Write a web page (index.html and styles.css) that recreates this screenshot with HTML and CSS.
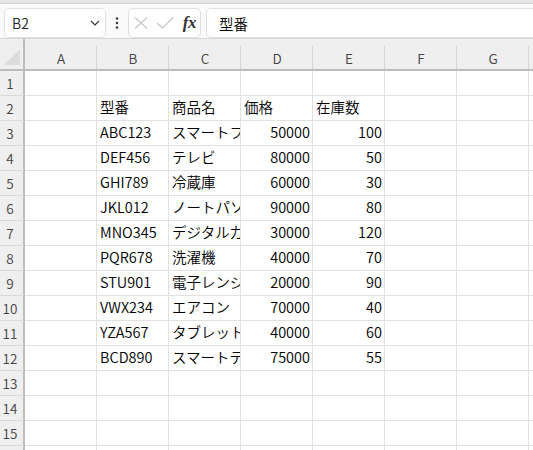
FILE: index.html
```html
<!DOCTYPE html>
<html lang="ja">
<head>
    <meta charset="UTF-8">
    <title>Sheet1</title>
    <link rel="stylesheet" href="styles.css">
</head>
<body>
    <div class="top-strip"></div>
    <div class="formula-bar">
        <div class="name-box">
            <span>B2</span>
            <svg class="chevron" width="10" height="6" viewBox="0 0 10 6"><path d="M1 1 L5 5 L9 1" fill="none" stroke="#333" stroke-width="1.1"/></svg>
        </div>
        <div class="more">
            <svg width="4" height="12" viewBox="0 0 4 12"><circle cx="2" cy="1.5" r="1.2" fill="#333"/><circle cx="2" cy="6" r="1.2" fill="#333"/><circle cx="2" cy="10.5" r="1.2" fill="#333"/></svg>
        </div>
        <div class="fx-box">
            <svg width="14" height="12" viewBox="0 0 14 12"><path d="M1 0.5 L13 11.5 M13 0.5 L1 11.5" stroke="#c6c6c6" stroke-width="1.1" fill="none"/></svg>
            <svg width="18" height="12" viewBox="0 0 18 12"><path d="M1 6 L6.5 11 L17 0.5" stroke="#c6c6c6" stroke-width="1.1" fill="none"/></svg>
            <span class="fx">fx</span>
        </div>
        <div class="formula-input">型番</div>
    </div>

    <div class="sheet">
        <div class="row head">
            <div class="corner"></div>
            <div class="ch">A</div><div class="ch">B</div><div class="ch">C</div><div class="ch">D</div>
            <div class="ch">E</div><div class="ch">F</div><div class="ch">G</div><div class="ch"></div>
        </div>
        <div class="row">
            <div class="rh">1</div><div></div><div></div><div></div><div></div><div></div><div></div><div></div><div></div>
        </div>
        <div class="row">
            <div class="rh">2</div><div></div><div>型番</div><div>商品名</div><div>価格</div><div>在庫数</div><div></div><div></div><div></div>
        </div>
        <div class="row">
            <div class="rh">3</div><div></div><div>ABC123</div><div class="clip">スマートフォン</div><div class="num">50000</div><div class="num">100</div><div></div><div></div><div></div>
        </div>
        <div class="row">
            <div class="rh">4</div><div></div><div>DEF456</div><div>テレビ</div><div class="num">80000</div><div class="num">50</div><div></div><div></div><div></div>
        </div>
        <div class="row">
            <div class="rh">5</div><div></div><div>GHI789</div><div>冷蔵庫</div><div class="num">60000</div><div class="num">30</div><div></div><div></div><div></div>
        </div>
        <div class="row">
            <div class="rh">6</div><div></div><div>JKL012</div><div class="clip">ノートパソコン</div><div class="num">90000</div><div class="num">80</div><div></div><div></div><div></div>
        </div>
        <div class="row">
            <div class="rh">7</div><div></div><div>MNO345</div><div class="clip">デジタルカメラ</div><div class="num">30000</div><div class="num">120</div><div></div><div></div><div></div>
        </div>
        <div class="row">
            <div class="rh">8</div><div></div><div>PQR678</div><div>洗濯機</div><div class="num">40000</div><div class="num">70</div><div></div><div></div><div></div>
        </div>
        <div class="row">
            <div class="rh">9</div><div></div><div>STU901</div><div class="clip">電子レンジ</div><div class="num">20000</div><div class="num">90</div><div></div><div></div><div></div>
        </div>
        <div class="row">
            <div class="rh">10</div><div></div><div>VWX234</div><div>エアコン</div><div class="num">70000</div><div class="num">40</div><div></div><div></div><div></div>
        </div>
        <div class="row">
            <div class="rh">11</div><div></div><div>YZA567</div><div class="clip">タブレット</div><div class="num">40000</div><div class="num">60</div><div></div><div></div><div></div>
        </div>
        <div class="row">
            <div class="rh">12</div><div></div><div>BCD890</div><div class="clip">スマートテレビ</div><div class="num">75000</div><div class="num">55</div><div></div><div></div><div></div>
        </div>
        <div class="row">
            <div class="rh">13</div><div></div><div></div><div></div><div></div><div></div><div></div><div></div><div></div>
        </div>
        <div class="row">
            <div class="rh">14</div><div></div><div></div><div></div><div></div><div></div><div></div><div></div><div></div>
        </div>
        <div class="row">
            <div class="rh">15</div><div></div><div></div><div></div><div></div><div></div><div></div><div></div><div></div>
        </div>
        <div class="row">
            <div class="rh">16</div><div></div><div></div><div></div><div></div><div></div><div></div><div></div><div></div>
        </div>
    </div>
</body>
</html>
```

FILE: styles.css
```css
body {
    margin: 0;
    background: #fff;
    font-family: "Noto Sans CJK JP", "Noto Sans", sans-serif;
    font-weight: 350;
    color: #000;
    overflow: hidden;
}
.top-strip {
    height: 3px;
    background: #e6e6e6;
    border-bottom: 1px solid #d2d2d2;
}
.formula-bar {
    display: flex;
    align-items: flex-start;
    height: 34px;
    padding: 4px 0 0 4px;
    box-sizing: border-box;
    background: #fafafa;
    overflow: hidden;
    white-space: nowrap;
}
.name-box,
.fx-box,
.formula-input {
    flex-shrink: 0;
    height: 30px;
    box-sizing: border-box;
    background: #fff;
    border: 1px solid #e0e0e0;
    border-radius: 5px;
    display: flex;
    align-items: center;
}
.name-box {
    width: 102px;
    padding: 0 5px 0 7px;
    justify-content: space-between;
    font-size: 14px;
    color: #222;
}
.more {
    flex-shrink: 0;
    width: 22px;
    height: 30px;
    display: flex;
    align-items: center;
    justify-content: center;
}
.fx-box {
    width: 73px;
    padding: 0 4px 0 5px;
    justify-content: space-between;
}
.fx {
    font-family: "Liberation Serif", serif;
    font-style: italic;
    font-weight: bold;
    font-size: 17px;
    color: #333;
    letter-spacing: -0.5px;
}
.formula-input {
    margin-left: 5px;
    width: 400px;
    padding-left: 12px;
    font-size: 14.5px;
}

.sheet {
    border-top: 1px solid #d6d6d6;
}
.row {
    display: grid;
    grid-template-columns: 25px repeat(7, 72px) 1fr;
    height: 25px;
}
.row > div {
    box-sizing: border-box;
    border-right: 1px solid #e1e1e1;
    border-bottom: 1px solid #e1e1e1;
    font-size: 14.5px;
    line-height: 22px;
    padding: 0 3px;
    white-space: nowrap;
    overflow: hidden;
}
.row > .num {
    text-align: right;
    padding-right: 2px;
}
.row > .clip {
    text-overflow: clip;
}
.row > .rh {
    background: #efefef;
    border-right: 2px solid #bdbdbd;
    border-bottom-color: #d8d8d8;
    color: #444;
    font-size: 13.5px;
    line-height: 24px;
    padding: 0 3px 0 0;
    text-align: center;
}
.row.head {
    height: 32px;
}
.row.head > div {
    background: #efefef linear-gradient(#d8d8d8, #d8d8d8) right bottom / 1px 23px no-repeat;
    border-right: 0;
    border-bottom: 2px solid #bdbdbd;
    color: #444;
    font-size: 13.5px;
    line-height: 20px;
    padding-top: 9px;
    text-align: center;
}
.row.head > .corner {
    background: #efefef;
    border-right: 2px solid #bdbdbd;
    position: relative;
}
.corner::after {
    content: "";
    position: absolute;
    right: 3px;
    bottom: 4px;
    width: 0;
    height: 0;
    border-left: 16px solid transparent;
    border-bottom: 16px solid #dcdcdc;
}
```
